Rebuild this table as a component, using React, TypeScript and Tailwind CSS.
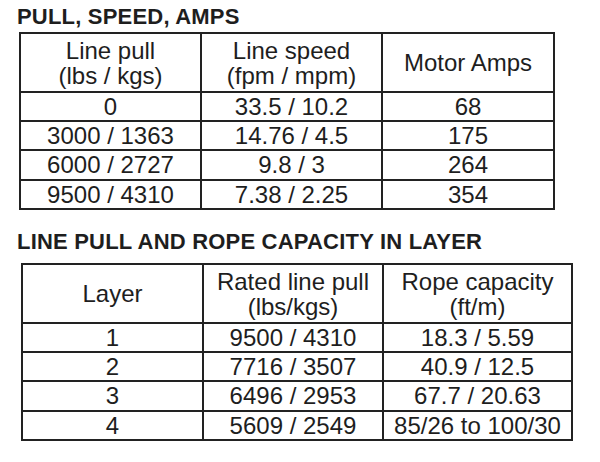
const pullRows = [
  ["0", "33.5 / 10.2", "68"],
  ["3000 / 1363", "14.76 / 4.5", "175"],
  ["6000 / 2727", "9.8 / 3", "264"],
  ["9500 / 4310", "7.38 / 2.25", "354"],
]

const layerRows = [
  ["1", "9500 / 4310", "18.3 / 5.59"],
  ["2", "7716 / 3507", "40.9 / 12.5"],
  ["3", "6496 / 2953", "67.7 / 20.63"],
  ["4", "5609 / 2549", "85/26 to 100/30"],
]

const rowHeights = ["h-[29px]", "h-[29px]", "h-[30px]", "h-[29px]"]

type TableProps = {
  cols: string
  head: React.ReactNode[]
  rows: string[][]
  className?: string
}

function SpecTable({ cols, head, rows, className = "" }: TableProps) {
  return (
    <div className={`grid border-l-2 border-t-2 border-[#222] ${cols} ${className}`}>
      {head.map((h, i) => (
        <div
          key={i}
          className="h-[59px] flex flex-col items-center justify-center border-r-2 border-b-2 border-[#222] text-center leading-[25px]"
        >
          {h}
        </div>
      ))}
      {rows.map((row, r) =>
        row.map((cell, c) => (
          <div
            key={`${r}-${c}`}
            className={`${rowHeights[r]} flex items-center justify-center border-r-2 border-b-2 border-[#222] leading-[24px] whitespace-nowrap`}
          >
            {cell}
          </div>
        ))
      )}
    </div>
  )
}

export default function App() {
  return (
    <div
      className="w-[600px] h-[462px] bg-white text-[#1e1e1e] px-[17px] pt-[4px] overflow-hidden"
      style={{ fontFamily: '"Liberation Sans", Arial, sans-serif' }}
    >
      <h2 className="text-[22px] font-bold leading-[26px] tracking-[0.2px]">
        PULL, SPEED, AMPS
      </h2>
      <SpecTable
        className="mt-[2px] ml-[2px] w-[536px] text-[24px]"
        cols="grid-cols-[181px_181px_172px]"
        head={[
          <>
            <span>Line pull</span>
            <span>(lbs / kgs)</span>
          </>,
          <>
            <span>Line speed</span>
            <span>(fpm / mpm)</span>
          </>,
          <span>Motor Amps</span>,
        ]}
        rows={pullRows}
      />
      <h2 className="mt-[19px] text-[22px] font-bold leading-[26px] tracking-[0.2px]">
        LINE PULL AND ROPE CAPACITY IN LAYER
      </h2>
      <SpecTable
        className="mt-[8px] ml-[4px] w-[552px] text-[24px]"
        cols="grid-cols-[181px_180px_189px]"
        head={[
          <span>Layer</span>,
          <>
            <span>Rated line pull</span>
            <span>(lbs/kgs)</span>
          </>,
          <>
            <span>Rope capacity</span>
            <span>(ft/m)</span>
          </>,
        ]}
        rows={layerRows}
      />
    </div>
  )
}
